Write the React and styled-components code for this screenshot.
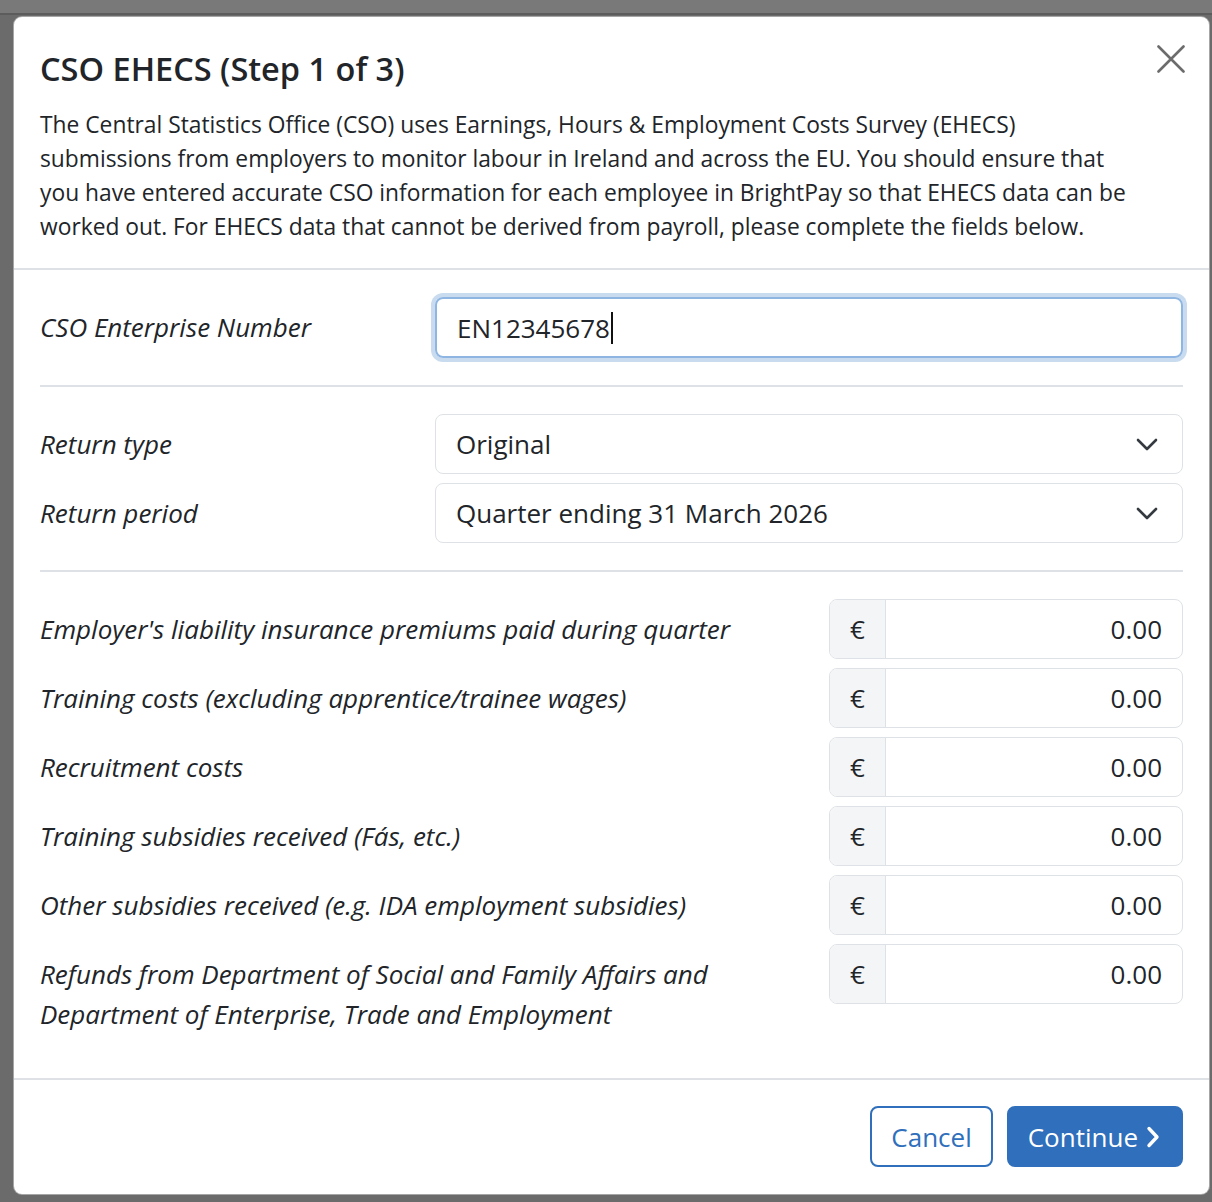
import styled, { createGlobalStyle } from "styled-components";

const GlobalStyle = createGlobalStyle`
  * { box-sizing: border-box; }
  html, body {
    margin: 0;
    padding: 0;
    background: #6b6b6b;
    font-family: "Open Sans", "Noto Sans", sans-serif;
    color: #212529;
  }
`;

const Backdrop = styled.div`
  min-height: 1202px;
  background: #6b6b6b;
  display: flex;
  flex-direction: column;
`;

const PageStrip = styled.div`
  height: 15px;
  background: #797979;
  border-bottom: 2px solid #5c5c5c;
`;

const Dialog = styled.div`
  margin: 1px 2px 0 13px;
  background: #fff;
  border: 1px solid rgba(0, 0, 0, 0.35);
  border-radius: 9px;
  display: flex;
  flex-direction: column;
`;

const Header = styled.div`
  padding: 32px 26px 24px;
  border-bottom: 2px solid #dee2e6;
`;

const TitleRow = styled.div`
  display: flex;
  justify-content: space-between;
  align-items: flex-start;
`;

const Title = styled.h2`
  margin: 0;
  font-size: 32.5px;
  font-weight: 600;
  line-height: 1.2;
  color: #212529;
`;

const CloseButton = styled.button`
  border: 0;
  background: none;
  padding: 0;
  margin: -5px -3px 0 0;
  width: 30px;
  height: 30px;
  color: #6c6c6c;
  display: flex;
  align-items: center;
  justify-content: center;
`;

const Intro = styled.p`
  margin: 20px 0 0;
  max-width: 1100px;
  font-size: 22.8px;
  line-height: 34px;
`;

const Body = styled.div`
  padding: 0 26px;
`;

const Section = styled.div`
  padding: ${(p) => p.$pad || "27px 0"};
  border-bottom: ${(p) => (p.$last ? "none" : "2px solid #dee2e6")};
  display: flex;
  flex-direction: column;
  gap: 9px;
`;

const FieldRow = styled.div`
  display: grid;
  grid-template-columns: ${(p) => (p.$money ? "1fr 354px" : "395px 1fr")};
  align-items: start;
`;

const Label = styled.label`
  font-style: italic;
  font-size: 26px;
  line-height: 40px;
  padding-top: 10px;
  padding-right: ${(p) => (p.$money ? "40px" : "0")};
  color: #212529;
`;

const TextBox = styled.div`
  height: 61px;
  border: 2px solid #8fb6e2;
  border-radius: 8px;
  box-shadow: 0 0 0 4px #c8dbef;
  display: flex;
  align-items: center;
  padding: 0 20px;
  font-size: 26px;
`;

const Caret = styled.span`
  display: inline-block;
  width: 2px;
  height: 32px;
  background: #111;
  margin-left: 1px;
`;

const SelectBox = styled.div`
  height: 60px;
  border: 1.5px solid #dee2e6;
  border-radius: 8px;
  display: flex;
  align-items: center;
  justify-content: space-between;
  padding: 0 24px 0 20px;
  font-size: 26px;
  color: #212529;
`;

const MoneyGroup = styled.div`
  height: 60px;
  border: 1.5px solid #dee2e6;
  border-radius: 8px;
  display: flex;
  overflow: hidden;
`;

const Addon = styled.span`
  width: 56px;
  background: #f4f5f7;
  border-right: 1.5px solid #dee2e6;
  display: flex;
  align-items: center;
  justify-content: center;
  font-size: 26px;
`;

const Amount = styled.span`
  flex: 1;
  display: flex;
  align-items: center;
  justify-content: flex-end;
  padding-right: 20px;
  font-size: 26px;
`;

const Footer = styled.div`
  border-top: 2px solid #dee2e6;
  padding: 26px 26px 27px;
  display: flex;
  justify-content: flex-end;
  gap: 14px;
`;

const Button = styled.button`
  height: 61px;
  border-radius: 8px;
  font-family: inherit;
  font-size: 26px;
  padding: ${(p) => (p.$primary ? "0 21px 0 19px" : "0 19px")};
  border: 2px solid #2f6fbb;
  background: ${(p) => (p.$primary ? "#2f6fbb" : "#fff")};
  color: ${(p) => (p.$primary ? "#fff" : "#2f6fbb")};
  display: flex;
  align-items: center;
  gap: 8px;
`;

const Chevron = ({ dir = "down" }) =>
  dir === "down" ? (
    <svg width="22" height="13" viewBox="0 0 22 13" fill="none">
      <path d="M2 2l9 9 9-9" stroke="#343a40" strokeWidth="2.6" strokeLinecap="round" strokeLinejoin="round" />
    </svg>
  ) : (
    <svg width="14" height="22" viewBox="0 0 14 22" fill="none">
      <path d="M3 2.5l8 8.5-8 8.5" stroke="#fff" strokeWidth="3.4" strokeLinecap="round" strokeLinejoin="round" />
    </svg>
  );

const costs = [
  "Employer's liability insurance premiums paid during quarter",
  "Training costs (excluding apprentice/trainee wages)",
  "Recruitment costs",
  "Training subsidies received (Fás, etc.)",
  "Other subsidies received (e.g. IDA employment subsidies)",
  "Refunds from Department of Social and Family Affairs and Department of Enterprise, Trade and Employment",
];

export default function App() {
  return (
    <Backdrop>
      <GlobalStyle />
      <PageStrip />
      <Dialog>
        <Header>
          <TitleRow>
            <Title>CSO EHECS (Step 1 of 3)</Title>
            <CloseButton aria-label="Close">
              <svg width="28" height="28" viewBox="0 0 28 28">
                <path d="M1.5 1.5l25 25M26.5 1.5l-25 25" stroke="currentColor" strokeWidth="2.6" strokeLinecap="round" />
              </svg>
            </CloseButton>
          </TitleRow>
          <Intro>
            The Central Statistics Office (CSO) uses Earnings, Hours &amp; Employment Costs Survey (EHECS)
            submissions from employers to monitor labour in Ireland and across the EU. You should ensure that
            you have entered accurate CSO information for each employee in BrightPay so that EHECS data can be
            worked out. For EHECS data that cannot be derived from payroll, please complete the fields below.
          </Intro>
        </Header>

        <Body>
          <Section>
            <FieldRow>
              <Label>CSO Enterprise Number</Label>
              <TextBox>
                EN12345678
                <Caret />
              </TextBox>
            </FieldRow>
          </Section>

          <Section>
            <FieldRow>
              <Label>Return type</Label>
              <SelectBox>
                Original
                <Chevron />
              </SelectBox>
            </FieldRow>
            <FieldRow>
              <Label>Return period</Label>
              <SelectBox>
                Quarter ending 31 March 2026
                <Chevron />
              </SelectBox>
            </FieldRow>
          </Section>

          <Section $last $pad="27px 0 44px">
            {costs.map((label) => (
              <FieldRow $money key={label}>
                <Label $money>{label}</Label>
                <MoneyGroup>
                  <Addon>€</Addon>
                  <Amount>0.00</Amount>
                </MoneyGroup>
              </FieldRow>
            ))}
          </Section>
        </Body>

        <Footer>
          <Button>Cancel</Button>
          <Button $primary>
            Continue
            <Chevron dir="right" />
          </Button>
        </Footer>
      </Dialog>
    </Backdrop>
  );
}
